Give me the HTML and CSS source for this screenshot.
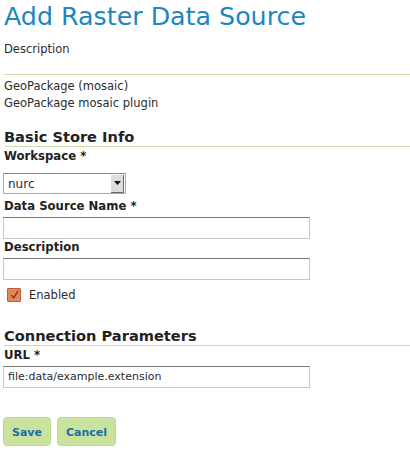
FILE: index.html
```html
<!DOCTYPE html>
<html>
<head>
<meta charset="utf-8">
<link rel="stylesheet" href="styles.css">
</head>
<body>
<div class="page">
  <h1 class="title">Add Raster Data Source</h1>
  <p class="desc-label">Description</p>
  <div class="rule"></div>
  <div class="info">
    <div>GeoPackage (mosaic)</div>
    <div>GeoPackage mosaic plugin</div>
  </div>

  <h2 class="section">Basic Store Info</h2>
  <div class="field-label first">Workspace *</div>
  <div class="select">
    <span class="select-text">nurc</span>
    <span class="select-btn">
      <svg width="7" height="4" viewBox="0 0 7 4"><path d="M0 0h7L3.5 4z" fill="#111"/></svg>
    </span>
  </div>
  <div class="field-label">Data Source Name *</div>
  <div class="input"></div>
  <div class="field-label">Description</div>
  <div class="input"></div>
  <div class="check-row">
    <span class="checkbox">
      <svg width="14" height="14" viewBox="0 0 14 14"><path d="M3 6.5l3 3.5 5.5-9" stroke="#7a3a1e" stroke-width="1.8" fill="none"/></svg>
    </span>
    <span class="check-label">Enabled</span>
  </div>

  <h2 class="section conn">Connection Parameters</h2>
  <div class="field-label first">URL *</div>
  <div class="input">file:data/example.extension</div>

  <div class="buttons">
    <span class="btn save">Save</span>
    <span class="btn cancel">Cancel</span>
  </div>
</div>
</body>
</html>
```
FILE: styles.css
```css
html, body {
  margin: 0;
  padding: 0;
  background: #fff;
}
.page {
  padding: 0 0 0 4px;
  font-family: "DejaVu Sans", Verdana, sans-serif;
  color: #2b2b2b;
}
.title {
  margin: 0;
  padding-top: 2px;
  font-weight: normal;
  font-size: 25.3px;
  line-height: 30px;
  color: #1b86c1;
}
.desc-label {
  margin: 9px 0 0;
  font-size: 11.5px;
  line-height: 16px;
}
.rule {
  margin-top: 17px;
  height: 1px;
  background: #c9dea8;
}
.info {
  font-size: 11.5px;
  line-height: 17px;
  padding-top: 3px;
}
.section {
  margin: 16px 0 0;
  font-size: 14.6px;
  line-height: 18px;
  font-weight: bold;
  color: #222;
  border-bottom: 1px solid #c9dea8;
  padding-bottom: 0;
}
.section.conn {
  margin-top: 24px;
}
.field-label {
  font-size: 11.7px;
  font-weight: bold;
  line-height: 16px;
  margin-top: 0;
  color: #222;
}
.field-label.first {
  margin-top: 1px;
}
.select {
  margin: 9px 0 4px -1px;
  width: 121px;
  height: 19px;
  border: 1px solid #aaa;
  border-top-color: #888;
  display: flex;
  align-items: center;
  font-size: 12px;
  background: #fff;
}
.select-text {
  flex: 1;
  padding-left: 4px;
}
.select-btn {
  width: 12px;
  height: 17px;
  margin-right: 1px;
  background: #ddd;
  border-right: 1px solid #666;
  border-bottom: 1px solid #666;
  display: flex;
  align-items: center;
  justify-content: center;
}
.input {
  margin: 3px 0 0 -1px;
  width: 301px;
  height: 20px;
  border: 1px solid #c8c8c8;
  border-top-color: #7a7a7a;
  font-size: 11px;
  line-height: 20px;
  padding-left: 4px;
  box-sizing: content-box;
}
.check-row {
  display: flex;
  align-items: center;
  margin-top: 7px;
  height: 16px;
}
.checkbox {
  width: 12px;
  height: 12px;
  margin-left: 3px;
  background: #e8845a;
  border: 1px solid #c0603a;
  border-radius: 1px;
  display: flex;
  align-items: center;
  justify-content: center;
}
.checkbox svg {
  width: 11px;
  height: 11px;
}
.check-label {
  margin-left: 8px;
  font-size: 11.5px;
}
.buttons {
  display: flex;
  gap: 6px;
  margin: 29px 0 0 -1px;
}
.btn {
  height: 29px;
  line-height: 29px;
  padding: 0 8px;
  background: #c9e29e;
  border: 1px solid #bcd98e;
  border-radius: 4px;
  color: #1a6fa3;
  font-size: 11px;
  font-weight: bold;
  box-sizing: border-box;
}
.btn.save { width: 48px; text-align: center; }
.btn.cancel { width: 59px; text-align: center; }
```
